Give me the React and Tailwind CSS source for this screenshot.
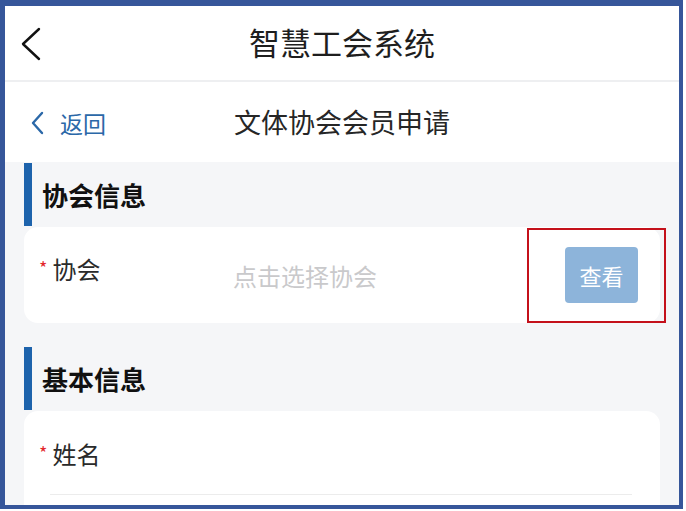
export default function App() {
  const font = { fontFamily: '"Noto Sans CJK SC", "Noto Sans", sans-serif' };
  return (
    <div className="w-[686px] h-[511px] bg-white" style={font}>
      <div className="relative w-[683px] h-[509px] border-l-[5px] border-t-[6px] border-r-[4px] border-b-[4px] border-[#36569a] overflow-hidden bg-[#f5f6f8] flex flex-col">
        {/* Top nav */}
        <div className="h-[76px] shrink-0 bg-white border-b-2 border-[#eeeff1] flex items-center relative">
          <div className="absolute left-[15px] top-[21px]">
            <svg width="22" height="34" viewBox="0 0 22 34" fill="none">
              <path d="M19 2 L3 17 L19 32" stroke="#111" strokeWidth="2.4" strokeLinecap="round" strokeLinejoin="round" />
            </svg>
          </div>
          <div className="flex-1 text-center text-[31px] leading-none text-[#1e1e1e] pb-[4px]">智慧工会系统</div>
        </div>
        {/* Second nav */}
        <div className="h-[80px] shrink-0 bg-white flex items-center relative">
          <div className="absolute left-[25px] top-[29px] flex items-center gap-[16px] text-[#2b68a8]">
            <svg width="14" height="24" viewBox="0 0 14 24" fill="none">
              <path d="M12 2 L3 12 L12 22" stroke="#2b68a8" strokeWidth="2.4" strokeLinecap="round" strokeLinejoin="round" />
            </svg>
            <span className="text-[23px] leading-none">返回</span>
          </div>
          <div className="flex-1 text-center text-[27px] leading-none text-[#262626] pb-[2px]">文体协会会员申请</div>
        </div>
        {/* Section 1 */}
        <div className="mt-[1px] ml-[19px] h-[63px] shrink-0 flex items-center">
          <div className="w-[8px] h-full bg-[#1d63ac]" />
          <div className="ml-[10px] text-[26px] font-bold leading-none text-[#111]">协会信息</div>
        </div>
        <div className="mt-[1px] mx-[19px] h-[96px] shrink-0 bg-white rounded-[14px] flex items-center pl-[15px] pr-[22px]">
          <div className="w-[194px] flex items-center mb-[12px]">
            <span className="text-[#e3262b] text-[18px] leading-none mr-[5px] mt-[-4px]">*</span>
            <span className="text-[24px] leading-none text-[#2a2a2a]">协会</span>
          </div>
          <div className="flex-1 text-[24px] leading-none text-[#c9c9cb] mt-[1px]">点击选择协会</div>
          <div className="w-[73px] h-[56px] rounded-[4px] bg-[#8db4da] flex items-center justify-center text-white text-[22px] leading-none">查看</div>
        </div>
        {/* Section 2 */}
        <div className="mt-[24px] ml-[19px] h-[63px] shrink-0 flex items-center">
          <div className="w-[8px] h-full bg-[#1d63ac]" />
          <div className="ml-[10px] text-[26px] font-bold leading-none text-[#111]">基本信息</div>
        </div>
        <div className="mt-[1px] mx-[19px] h-[140px] shrink-0 bg-white rounded-t-[14px] pl-[15px]">
          <div className="pt-[31px] flex items-center">
            <span className="text-[#e3262b] text-[18px] leading-none mr-[5px] mt-[-4px]">*</span>
            <span className="text-[24px] leading-none text-[#2a2a2a]">姓名</span>
          </div>
          <div className="mt-[28px] ml-[11px] mr-[28px] h-px bg-[#ececec]" />
        </div>
        {/* Annotation box */}
        <div className="absolute left-[522px] top-[222px] w-[139px] h-[95px] border-2 border-[#c4111b]" />
      </div>
    </div>
  );
}
